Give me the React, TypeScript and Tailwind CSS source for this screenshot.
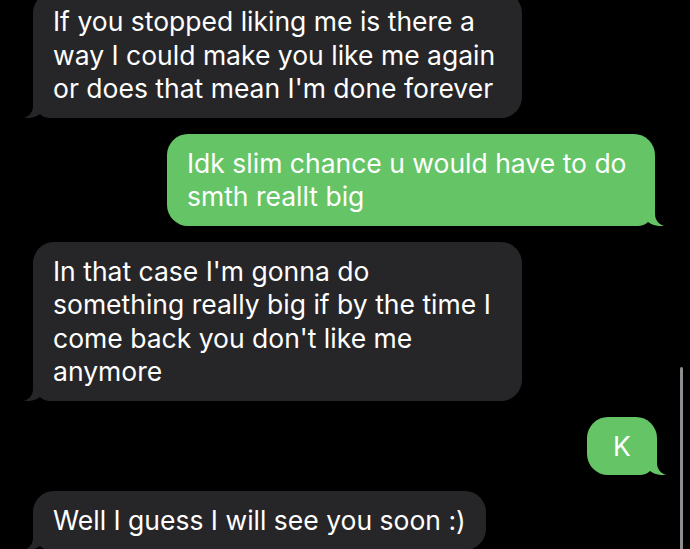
const GRAY = "#262628";
const GREEN = "#65c466";

function Tail({ side, color }: { side: "left" | "right"; color: string }) {
  // iMessage-style hook at the bottom corner
  return (
    <svg
      width="30"
      height="22"
      viewBox="0 0 30 22"
      className={
        side === "left"
          ? "absolute bottom-0 left-[-9px]"
          : "absolute bottom-0 right-[-9px] -scale-x-100"
      }
    >
      <path
        d="M9 0 L9 10 C9 16 5 20.5 0 22 C6 22.6 12 21 16 18 C18.5 20.5 22 22 27 22 L30 22 L30 0 Z"
        fill={color}
      />
    </svg>
  );
}

function Bubble({
  lines,
  side,
  className = "",
}: {
  lines: string[];
  side: "left" | "right";
  className?: string;
}) {
  const color = side === "left" ? GRAY : GREEN;
  return (
    <div
      className={`relative rounded-[21px] px-5 pt-[13px] pb-[12px] text-[26.5px] leading-[33.5px] text-white ${
        side === "left" ? "self-start bg-[#262628]" : "self-end bg-[#65c466]"
      } ${className}`}
    >
      <Tail side={side} color={color} />
      <div className="relative">
        {lines.map((l, i) => (
          <div key={i} className="whitespace-nowrap">
            {l}
          </div>
        ))}
      </div>
    </div>
  );
}

export default function App() {
  return (
    <div
      className="relative flex h-[549px] w-[690px] flex-col gap-4 overflow-hidden bg-black"
      style={{ fontFamily: "Inter, 'Liberation Sans', sans-serif" }}
    >
      <Bubble
        side="left"
        className="mt-[-8px] ml-[33px] w-[489px]"
        lines={[
          "If you stopped liking me is there a",
          "way I could make you like me again",
          "or does that mean I'm done forever",
        ]}
      />
      <Bubble
        side="right"
        className="mr-[35px] w-[488px]"
        lines={["Idk slim chance u would have to do", "smth reallt big"]}
      />
      <Bubble
        side="left"
        className="ml-[33px] w-[489px]"
        lines={[
          "In that case I'm gonna do",
          "something really big if by the time I",
          "come back you don't like me",
          "anymore",
        ]}
      />
      <Bubble side="right" className="mr-[33px] w-[70px] text-center" lines={["K"]} />
      <Bubble side="left" className="ml-[33px]" lines={["Well I guess I will see you soon :)"]} />

      {/* scroll indicator */}
      <div className="absolute top-[367px] right-[7px] h-[200px] w-[3px] rounded-full bg-[#8e8e92]" />
    </div>
  );
}
